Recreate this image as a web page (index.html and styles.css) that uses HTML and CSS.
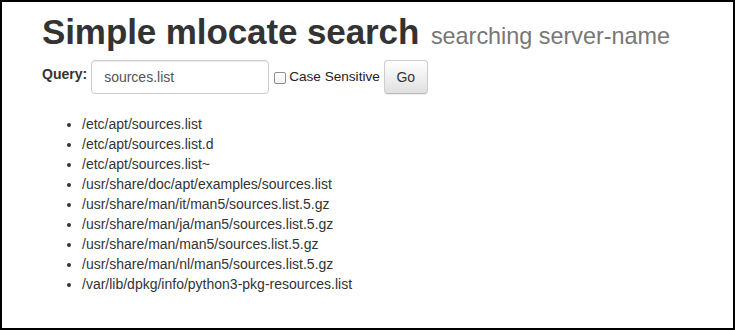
FILE: index.html
```html
<!DOCTYPE html>
<html lang="en">
<head>
<meta charset="utf-8">
<title>Simple mlocate search</title>
<link rel="stylesheet" href="styles.css">
</head>
<body>
<div class="frame">
  <div class="container">
    <h1 class="title">Simple mlocate search <small class="subtitle">searching server-name</small></h1>
    <form class="search-form">
      <label class="query-label" for="q">Query:</label>
      <input class="query-input" id="q" type="text" value="sources.list">
      <label class="case-label"><input class="case-box" type="checkbox">Case Sensitive</label>
      <button class="go-btn" type="button">Go</button>
    </form>
    <ul class="results">
      <li>/etc/apt/sources.list</li>
      <li>/etc/apt/sources.list.d</li>
      <li>/etc/apt/sources.list~</li>
      <li>/usr/share/doc/apt/examples/sources.list</li>
      <li>/usr/share/man/it/man5/sources.list.5.gz</li>
      <li>/usr/share/man/ja/man5/sources.list.5.gz</li>
      <li>/usr/share/man/man5/sources.list.5.gz</li>
      <li>/usr/share/man/nl/man5/sources.list.5.gz</li>
      <li>/var/lib/dpkg/info/python3-pkg-resources.list</li>
    </ul>
  </div>
</div>
</body>
</html>
```
FILE: styles.css
```css
* { box-sizing: border-box; }
html, body { margin: 0; padding: 0; background: #fff; }
body {
  font-family: "Liberation Sans", Arial, Helvetica, sans-serif;
  font-size: 14px;
  line-height: 20px;
  color: #333;
}
.frame {
  width: 735px;
  height: 330px;
  border: 2px solid #000;
  overflow: hidden;
}
.container {
  padding: 0 40px;
}
.title {
  margin: 10px 0 4px;
  font-size: 35px;
  line-height: 40px;
  font-weight: bold;
  color: #333;
  letter-spacing: -0.1px;
}
.subtitle {
  font-size: 23.4px;
  font-weight: normal;
  color: #777;
  letter-spacing: 0;
  margin-left: 2px;
}
.search-form {
  display: flex;
  align-items: center;
  height: 34px;
}
.query-label {
  font-weight: bold;
  font-size: 14px;
  margin-right: 4px;
  position: relative;
  top: -3px;
}
.query-input {
  width: 178px;
  height: 34px;
  padding: 6px 12px;
  font-family: inherit;
  font-size: 14px;
  color: #555;
  border: 1px solid #ccc;
  border-radius: 4px;
  box-shadow: inset 0 1px 1px rgba(0,0,0,0.075);
  outline: none;
}
.case-label {
  display: flex;
  align-items: center;
  margin-left: 5px;
  font-size: 13.6px;
  color: #222;
}
.case-box {
  appearance: none;
  -webkit-appearance: none;
  width: 12px;
  height: 12px;
  margin: 2px 3px 0 0;
  border: 1px solid #8f8f8f;
  border-radius: 2px;
  background: linear-gradient(#fff, #f2f2f2);
}
.go-btn {
  margin-left: 4px;
  width: 44px;
  height: 34px;
  padding: 6px 0;
  font-family: inherit;
  font-size: 14px;
  color: #333;
  background: linear-gradient(#fff, #e0e0e0);
  border: 1px solid #ccc;
  border-bottom-color: #bbb;
  border-radius: 4px;
  box-shadow: inset 0 1px 0 rgba(255,255,255,0.15), 0 1px 1px rgba(0,0,0,0.075);
}
.results {
  margin: 20px 0 0;
  padding-left: 40px;
}
.results li {
  line-height: 20px;
}
```
